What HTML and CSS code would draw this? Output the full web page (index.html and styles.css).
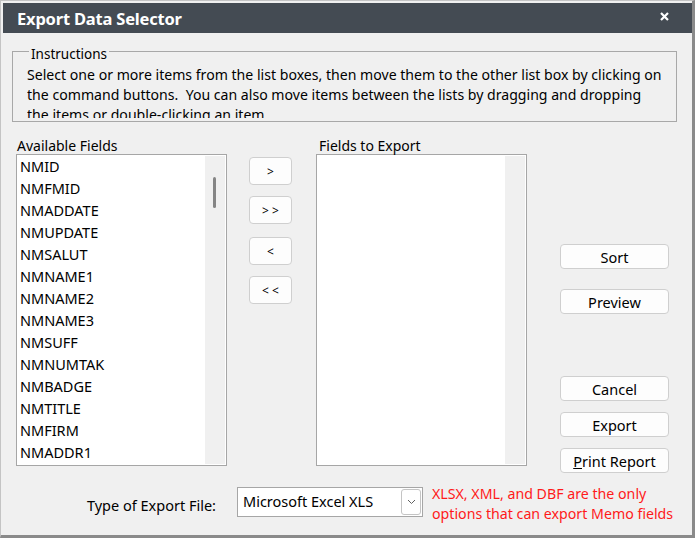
FILE: index.html
```html
<!DOCTYPE html>
<html lang="en">
<head>
    <meta charset="UTF-8">
    <title>Export Data Selector</title>
    <link rel="stylesheet" href="styles.css">
</head>
<body>
    <div class="window">
        <div class="titlebar">
            <span class="title">Export Data Selector</span>
            <svg class="close" width="9" height="9" viewBox="0 0 9 9">
                <path d="M1 1 L8 8 M8 1 L1 8" stroke="#fff" stroke-width="2.2" fill="none"/>
            </svg>
        </div>
        <div class="content">
            <fieldset class="instructions">
                <legend>Instructions</legend>
                <div class="instructions-text">
                    Select one or more items from the list boxes, then move them to the other list box by clicking on<br>
                    the command buttons.&nbsp; You can also move items between the lists by dragging and dropping<br>
                    the items or double-clicking an item.
                </div>
            </fieldset>

            <div class="main">
                <div class="column">
                    <div class="label">Available Fields</div>
                    <div class="listbox">
                        <div class="items">
                            <div class="item">NMID</div>
                            <div class="item">NMFMID</div>
                            <div class="item">NMADDATE</div>
                            <div class="item">NMUPDATE</div>
                            <div class="item">NMSALUT</div>
                            <div class="item">NMNAME1</div>
                            <div class="item">NMNAME2</div>
                            <div class="item">NMNAME3</div>
                            <div class="item">NMSUFF</div>
                            <div class="item">NMNUMTAK</div>
                            <div class="item">NMBADGE</div>
                            <div class="item">NMTITLE</div>
                            <div class="item">NMFIRM</div>
                            <div class="item">NMADDR1</div>
                        </div>
                        <div class="track"><div class="thumb"></div></div>
                    </div>
                </div>

                <div class="movers">
                    <button class="btn mover">&gt;</button>
                    <button class="btn mover">&gt; &gt;</button>
                    <button class="btn mover">&lt;</button>
                    <button class="btn mover">&lt; &lt;</button>
                </div>

                <div class="column">
                    <div class="label export-label">Fields to Export</div>
                    <div class="listbox">
                        <div class="items"></div>
                        <div class="track"></div>
                    </div>
                </div>

                <div class="actions">
                    <button class="btn action">Sort</button>
                    <button class="btn action">Preview</button>
                    <button class="btn action cancel">Cancel</button>
                    <button class="btn action">Export</button>
                    <button class="btn action"><u>P</u>rint Report</button>
                </div>
            </div>

            <div class="footer">
                <span class="type-label">Type of Export File:</span>
                <div class="combo">
                    <span class="combo-value">Microsoft Excel XLS</span>
                    <span class="combo-button">
                        <svg width="9" height="6" viewBox="0 0 9 6">
                            <path d="M1 1 L4.5 4.5 L8 1" stroke="#606060" stroke-width="1" fill="none"/>
                        </svg>
                    </span>
                </div>
                <div class="note">XLSX, XML, and DBF are the only<br>options that can export Memo fields</div>
            </div>
        </div>
    </div>
</body>
</html>
```

FILE: styles.css
```css
body {
    margin: 0;
    background-color: #f0f0f0;
    font-family: "Noto Sans", "Open Sans", sans-serif;
}
.window {
    width: 695px;
    height: 538px;
    box-sizing: border-box;
    border-left: 1px solid #c4c4c4;
    border-top: 1px solid #c4c4c4;
    border-right: 3px solid #8a8a8a;
    border-bottom: 3px solid #8a8a8a;
    padding: 2px 0 0 2px;
    background-color: #f0f0f0;
    display: flex;
    flex-direction: column;
}
.titlebar {
    height: 30px;
    background-color: #444b53;
    display: flex;
    align-items: center;
    justify-content: space-between;
    padding: 0 23px 0 14px;
    flex-shrink: 0;
}
.title {
    color: #fff;
    font-weight: bold;
    font-size: 16.5px;
    letter-spacing: -0.2px;
    margin-top: 1px;
}
.close {
    margin-top: -4px;
}
.content {
    flex: 1;
    padding: 0 0 0 9px;
    font-size: 14px;
    color: #000;
}
.instructions {
    width: 665px;
    box-sizing: border-box;
    margin: 8px 0 0 0;
    padding: 0 0 3px 14px;
    border: 1px solid #a8a8a8;
}
.instructions legend {
    padding: 6px 2px 0 2px;
    margin-left: 2px;
    font-size: 13.5px;
    line-height: 14px;
}
.instructions-text {
    height: 53px;
    margin-top: 4px;
    overflow: hidden;
    line-height: 20px;
    font-size: 14.1px;
    white-space: nowrap;
}
.main {
    display: flex;
    margin-top: 15px;
    padding-left: 4px;
}
.column {
    width: 211px;
}
.label {
    height: 17px;
    line-height: 17px;
    padding-left: 1px;
}
.export-label {
    padding-left: 3px;
}
.listbox {
    height: 312px;
    box-sizing: border-box;
    border: 1px solid #a6a6a6;
    background-color: #fff;
    display: flex;
}
.items {
    flex: 1;
    padding: 0 0 0 3px;
}
.item {
    height: 22px;
    line-height: 22px;
    font-size: 14.5px;
}
.track {
    width: 20px;
    margin: 1px 1px 1px 0;
    background-color: #f0f0f0;
}
.thumb {
    width: 3px;
    height: 31px;
    margin: 21px 0 0 8px;
    border-radius: 2px;
    background-color: #858585;
}
.movers {
    width: 43px;
    margin: 20px 24px 0 22px;
    display: flex;
    flex-direction: column;
    gap: 11px;
}
.btn {
    box-sizing: border-box;
    background-color: #fdfdfd;
    border: 1px solid #cfcfcf;
    border-radius: 4px;
    font-family: "Noto Sans", "Open Sans", sans-serif;
    color: #000;
    padding: 0;
}
.mover {
    height: 28px;
    font-size: 12px;
}
.mover:nth-child(3) {
    margin-top: 2px;
}
.actions {
    width: 109px;
    margin-left: 33px;
    padding-top: 107px;
    display: flex;
    flex-direction: column;
    gap: 11px;
}
.action {
    height: 25px;
    font-size: 14.5px;
    line-height: 22px;
}
.actions .action:nth-child(2) {
    margin-top: 9px;
}
.actions .cancel {
    margin-top: 51px;
}
.footer {
    display: flex;
    align-items: flex-start;
    margin-top: 14px;
}
.type-label {
    width: 204px;
    text-align: right;
    margin-top: 8px;
    font-size: 14.5px;
}
.combo {
    width: 186px;
    height: 30px;
    box-sizing: border-box;
    margin-left: 21px;
    border: 1px solid #a6a6a6;
    background-color: #fff;
    display: flex;
    align-items: center;
    justify-content: space-between;
}
.combo-value {
    padding-left: 5px;
    font-size: 14.5px;
    margin-top: -2px;
}
.combo-button {
    width: 20px;
    height: 26px;
    margin-right: 1px;
    box-sizing: border-box;
    border: 1px solid #c4c4c4;
    border-radius: 3px;
    display: flex;
    align-items: center;
    justify-content: center;
}
.note {
    margin-left: 9px;
    margin-top: -3px;
    color: #ff1a1a;
    font-size: 14.2px;
    line-height: 20px;
}
```
